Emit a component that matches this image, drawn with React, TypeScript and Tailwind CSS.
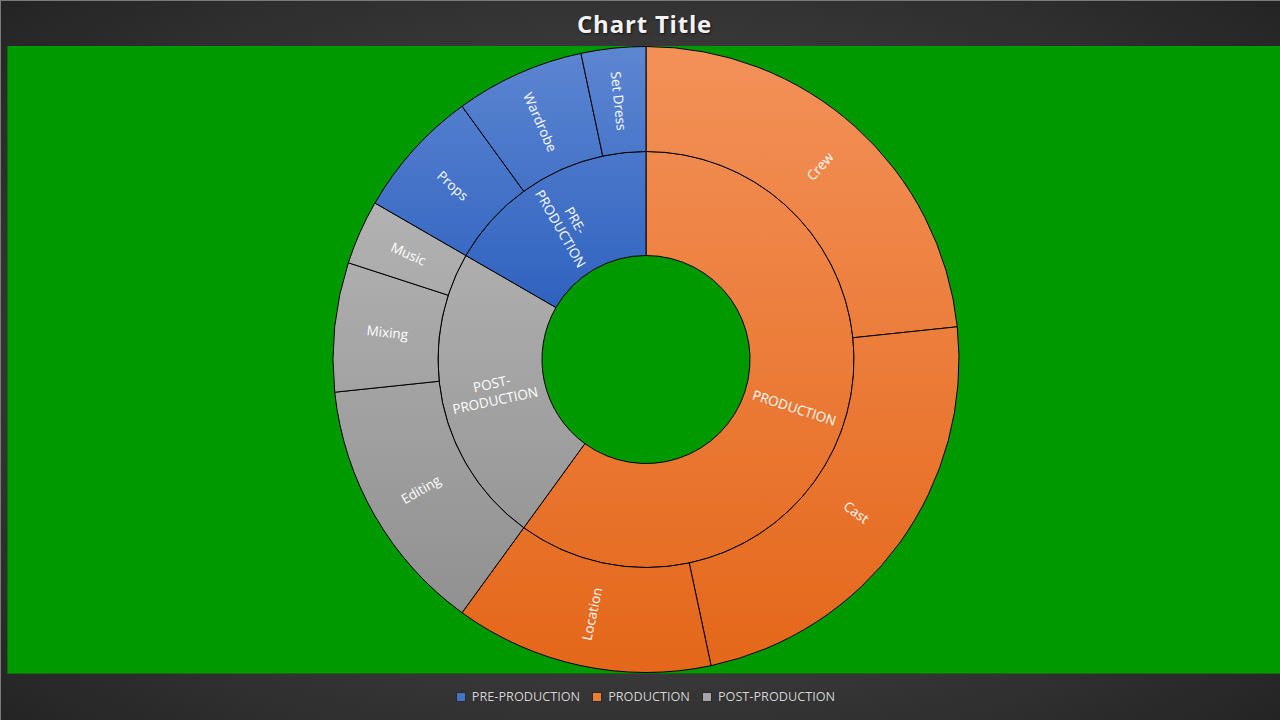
const CX = 638
const CY = 313.5

type Seg = {
  label: string[]
  from: number
  to: number
  color: 'blue' | 'orange' | 'gray'
  ring: 'inner' | 'outer'
}

const segments: Seg[] = [
  { label: ['PRODUCTION'], from: 0, to: 216, color: 'orange', ring: 'inner' },
  { label: ['POST-', 'PRODUCTION'], from: 216, to: 300, color: 'gray', ring: 'inner' },
  { label: ['PRE-', 'PRODUCTION'], from: 300, to: 360, color: 'blue', ring: 'inner' },
  { label: ['Crew'], from: 0, to: 84, color: 'orange', ring: 'outer' },
  { label: ['Cast'], from: 84, to: 168, color: 'orange', ring: 'outer' },
  { label: ['Location'], from: 168, to: 216, color: 'orange', ring: 'outer' },
  { label: ['Editing'], from: 216, to: 264, color: 'gray', ring: 'outer' },
  { label: ['Mixing'], from: 264, to: 288, color: 'gray', ring: 'outer' },
  { label: ['Music'], from: 288, to: 300, color: 'gray', ring: 'outer' },
  { label: ['Props'], from: 300, to: 324, color: 'blue', ring: 'outer' },
  { label: ['Wardrobe'], from: 324, to: 348, color: 'blue', ring: 'outer' },
  { label: ['Set Dress'], from: 348, to: 360, color: 'blue', ring: 'outer' },
]

const rad = (d: number) => (d * Math.PI) / 180

function pt(r: number, a: number) {
  return [CX + r * Math.sin(rad(a)), CY - r * Math.cos(rad(a))]
}

function arcPath(r0: number, r1: number, a0: number, a1: number) {
  const large = a1 - a0 > 180 ? 1 : 0
  const [x1, y1] = pt(r1, a0)
  const [x2, y2] = pt(r1, a1)
  const [x3, y3] = pt(r0, a1)
  const [x4, y4] = pt(r0, a0)
  return `M${x1},${y1} A${r1},${r1} 0 ${large} 1 ${x2},${y2} L${x3},${y3} A${r0},${r0} 0 ${large} 0 ${x4},${y4} Z`
}

function labelPos(seg: Seg) {
  const mid = (seg.from + seg.to) / 2
  const r = seg.ring === 'inner' ? 156 : 260
  const [x, y] = pt(r, mid)
  // radial direction, flipped on the left half so text never reads upside down
  let rot = mid - 90
  if (mid > 180) rot = mid - 270
  return { x, y, rot }
}

function Sunburst() {
  return (
    <svg width="1273" height="628" viewBox="0 0 1273 628" className="block">
      <defs>
        <linearGradient id="g-orange" gradientUnits="userSpaceOnUse" x1="0" y1="1" x2="0" y2="626">
          <stop offset="0" stopColor="#f39159" />
          <stop offset="1" stopColor="#e4671a" />
        </linearGradient>
        <linearGradient id="g-blue" gradientUnits="userSpaceOnUse" x1="0" y1="1" x2="0" y2="626">
          <stop offset="0" stopColor="#5d86d2" />
          <stop offset="0.42" stopColor="#2f62bf" />
          <stop offset="1" stopColor="#2458b4" />
        </linearGradient>
        <linearGradient id="g-gray" gradientUnits="userSpaceOnUse" x1="0" y1="1" x2="0" y2="626">
          <stop offset="0" stopColor="#bdbdbd" />
          <stop offset="0.25" stopColor="#b2b2b2" />
          <stop offset="1" stopColor="#8c8c8c" />
        </linearGradient>
      </defs>

      {segments.map((s, i) => (
        <path
          key={i}
          d={s.ring === 'inner' ? arcPath(104, 208, s.from, s.to) : arcPath(208, 313, s.from, s.to)}
          fill={`url(#g-${s.color})`}
          stroke="#000"
          strokeWidth="1"
        />
      ))}

      {segments.map((s, i) => {
        const { x, y, rot } = labelPos(s)
        const lh = 17
        const top = -((s.label.length - 1) * lh) / 2
        return (
          <text
            key={i}
            transform={`translate(${x} ${y}) rotate(${rot})`}
            textAnchor="middle"
            dominantBaseline="central"
            fill="#ffffff"
            fontSize="13.5"
            style={{ fontFamily: '"Open Sans", "Noto Sans", sans-serif' }}
          >
            {s.label.map((line, j) => (
              <tspan key={j} x="0" y={top + j * lh}>
                {line}
              </tspan>
            ))}
          </text>
        )
      })}
    </svg>
  )
}

const legend = [
  { name: 'PRE-PRODUCTION', color: 'bg-[#4472c4]' },
  { name: 'PRODUCTION', color: 'bg-[#ed7d31]' },
  { name: 'POST-PRODUCTION', color: 'bg-[#a5a5a5]' },
]

export default function App() {
  return (
    <main className="h-[720px] w-[1280px] overflow-hidden border-l border-t border-[#7a7a7a] bg-[radial-gradient(ellipse_at_center,#4d4d4d_0%,#3b3b3b_55%,#242424_100%)] font-['Open_Sans',sans-serif]">
      <div className="flex h-[45px] items-center justify-center pl-[8px]">
        <h1 className="text-[24px] font-bold tracking-[0.8px] text-[#f2f2f2] [text-shadow:1px_1px_2px_rgba(0,0,0,0.7)]">
          Chart Title
        </h1>
      </div>

      <div className="ml-[6px] h-[628px] w-[1273px] border-b border-l border-[#0b6e0b] bg-[#009900]">
        <Sunburst />
      </div>

      <div className="flex h-[46px] items-center justify-center gap-3 pl-[10px]">
        {legend.map((l) => (
          <div key={l.name} className="flex items-center gap-[6px]">
            <span className={`h-[10px] w-[10px] border border-[#2a2a2a] ${l.color}`} />
            <span className="text-[12.7px] text-[#d9d9d9] [text-shadow:0_0_1px_rgba(0,0,0,0.6)]">{l.name}</span>
          </div>
        ))}
      </div>
    </main>
  )
}
